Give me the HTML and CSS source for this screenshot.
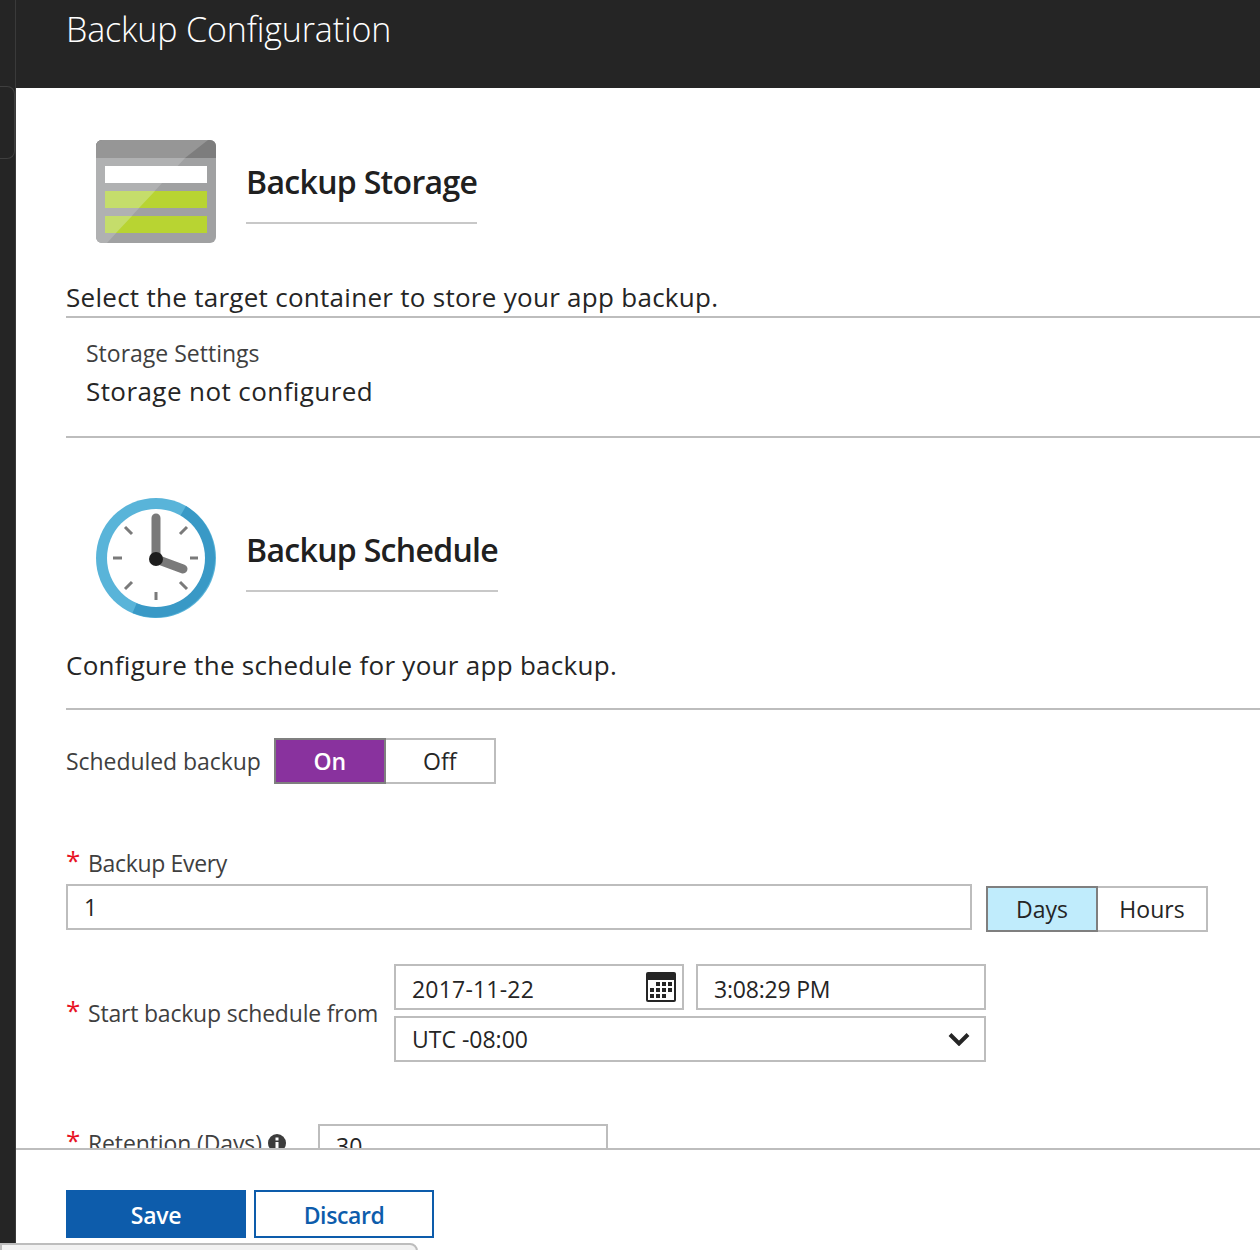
FILE: index.html
```html
<!DOCTYPE html>
<html lang="en">
<head>
  <meta charset="UTF-8" />
  <title>Backup Configuration</title>
  <link rel="stylesheet" href="styles.css">
</head>
<body>
  <div id="app">
    <div id="rail"><span class="rail-tab"></span></div>

    <div id="blade">
      <div id="top-bar">
        <h1>Backup Configuration</h1>
      </div>

      <div id="content">
        <div class="section-head storage-head">
          <svg class="section-icon" width="120" height="104" viewBox="0 0 120 104">
            <rect width="120" height="103" rx="6" fill="#a0a1a2"/>
            <path d="M6 0h108a6 6 0 0 1 6 6v12H0V6a6 6 0 0 1 6-6z" fill="#7d7d7d"/>
            <path d="M6 0h106L89 18H0V6a6 6 0 0 1 6-6z" fill="#969696"/>
            <path d="M0 18h89L11 103H6a6 6 0 0 1-6-6z" fill="#b0b1b2"/>
            <rect x="9" y="26" width="102" height="17" fill="#fff"/>
            <rect x="9" y="51" width="102" height="17" fill="#b8d432"/>
            <rect x="9" y="76" width="102" height="17" fill="#b8d432"/>
            <path d="M9 51h50L43 68H9zM9 76h27L20 93H9z" fill="#c5dd6b"/>
          </svg>
          <h2 class="section-title">Backup Storage</h2>
        </div>
        <p class="section-desc">Select the target container to store your app backup.</p>

        <div class="storage-box">
          <div class="storage-label">Storage Settings</div>
          <div class="storage-value">Storage not configured</div>
        </div>

        <div class="section-head schedule-head">
          <svg class="section-icon" width="120" height="120" viewBox="0 0 120 120">
            <circle cx="60" cy="60" r="60" fill="#59b4d9"/>
            <path d="M90 8A60 60 0 0 1 36.500 115L60 60z" fill="#3999c6"/>
            <circle cx="60" cy="60" r="49" fill="#fff"/>
            <path d="M17 60h9M94 60h8M60 94v8M29 29l7 7M91 29l-7 7M29 91l7-7M91 91l-7-7" stroke="#7a7a7a" stroke-width="3" fill="none"/>
            <path d="M60 61V20M60 61l27 10" stroke="#7a7a7a" stroke-width="9" stroke-linecap="round" fill="none"/>
            <circle cx="60" cy="61" r="7" fill="#1e1e1e"/>
          </svg>
          <h2 class="section-title">Backup Schedule</h2>
        </div>
        <p class="section-desc schedule-desc">Configure the schedule for your app backup.</p>

        <div class="toggle-row">
          <span class="field-label scheduled">Scheduled backup</span>
          <div class="toggle">
            <span class="toggle-opt on">On</span>
            <span class="toggle-opt">Off</span>
          </div>
        </div>

        <div class="field-title"><span class="req">*</span><span class="field-label every">Backup Every</span></div>
        <div class="every-row">
          <div class="text-box every-box">1</div>
          <div class="toggle unit">
            <span class="toggle-opt days">Days</span>
            <span class="toggle-opt">Hours</span>
          </div>
        </div>

        <div class="start-row">
          <div class="start-label"><span class="req">*</span><span class="field-label start">Start backup schedule from</span></div>
          <div class="start-grid">
            <div class="text-box date-box">
              2017-11-22
              <svg width="30" height="30" viewBox="0 0 30 30">
                <rect width="30" height="30" rx="2" fill="#252525"/>
                <rect x="2" y="8" width="26" height="20" fill="#fff"/>
                <path d="M10 10h4v4h-4zM16 10h4v4h-4zM22 10h4v4h-4zM4 16h4v4H4zM10 16h4v4h-4zM16 16h4v4h-4zM22 16h4v4h-4zM4 22h4v4H4zM10 22h4v4h-4zM16 22h4v4h-4z" fill="#252525"/>
              </svg>
            </div>
            <div class="text-box time-box">3:08:29 PM</div>
            <div class="text-box select-box">
              UTC -08:00
              <svg width="22" height="14" viewBox="0 0 22 14">
                <path d="M2 2.500l9 9 9-9" fill="none" stroke="#252525" stroke-width="4"/>
              </svg>
            </div>
          </div>
        </div>

        <div class="retention-row">
          <div class="retention-label">
            <span class="req">*</span><span class="field-label retention">Retention (Days)</span>
            <svg class="info" width="18" height="18" viewBox="0 0 18 18">
              <circle cx="9" cy="9" r="9" fill="#3c3c3c"/>
              <path d="M7.500 3.500h3v3h-3zM7.500 8h3v7h-3z" fill="#fff"/>
            </svg>
          </div>
          <div class="text-box retention-box">30</div>
        </div>
      </div>

      <div id="footer">
        <button class="btn btn-save">Save</button>
        <button class="btn btn-discard">Discard</button>
      </div>
    </div>
  </div>
  <div id="bottom-tab"></div>
</body>
</html>
```

FILE: styles.css
```css
:root {
  --dark: #252525;
  --line: #bdbdbd;
  --text: #252525;
  --label: #3f3f3f;
  --blue: #0d5cab;
}

* {
  box-sizing: border-box;
}

html, body {
  margin: 0;
  height: 1250px;
  overflow: hidden;
}

body {
  font-family: "Open Sans", "Noto Sans", sans-serif;
  color: var(--text);
  background: #fff;
}

#app {
  display: flex;
  height: 1250px;
}

#rail {
  width: 16px;
  background: var(--dark);
  flex-shrink: 0;
  padding-top: 86px;
  border-right: 1px solid #3a3a3a;
}

.rail-tab {
  display: block;
  height: 73px;
  width: 15px;
  border: 1px solid #3f3f3f;
  border-left: none;
  border-radius: 0 8px 8px 0;
}

#blade {
  flex: 1;
  min-width: 0;
  display: flex;
  flex-direction: column;
}

#top-bar {
  height: 88px;
  background: var(--dark);
  padding: 4px 0 0 50px;
  flex-shrink: 0;
}

#top-bar h1 {
  margin: 0;
  font-size: 34px;
  line-height: 50px;
  font-weight: 300;
  color: #fff;
  letter-spacing: -0.15px;
}

#content {
  height: 1060px;
  overflow: hidden;
  padding-left: 50px;
  flex-shrink: 0;
}

.section-head {
  display: flex;
  align-items: flex-start;
  padding-left: 30px;
}

.storage-head {
  padding-top: 52px;
  height: 155px;
}

.schedule-head {
  padding-top: 60px;
  height: 181px;
}

.section-icon {
  flex-shrink: 0;
  display: block;
}

.section-title {
  margin: 0 0 0 30px;
  height: 84px;
  padding-top: 20px;
  line-height: 44px;
  font-size: 32px;
  font-weight: 600;
  letter-spacing: -0.68px;
  border-bottom: 2px solid #c8c8c8;
  color: #202020;
}

.schedule-head .section-title {
  margin-top: 10px;
}

.section-desc {
  margin: 0;
  height: 75px;
  padding-top: 36px;
  font-size: 26px;
  line-height: 36px;
  letter-spacing: 0.28px;
  border-bottom: 2px solid var(--line);
}

.schedule-desc {
  height: 91px;
  padding-top: 28px;
}

.storage-box {
  height: 120px;
  padding: 17px 0 0 20px;
  border-bottom: 2px solid var(--line);
}

.storage-label {
  font-size: 23px;
  line-height: 36px;
  color: var(--label);
}

.storage-value {
  font-size: 26px;
  line-height: 40px;
  letter-spacing: 0.42px;
}

.field-label {
  font-size: 23px;
  line-height: 36px;
  color: var(--label);
}

.scheduled {
  letter-spacing: -0.06px;
}

.every {
  letter-spacing: -0.33px;
}

.start {
  letter-spacing: -0.2px;
}

.retention {
  letter-spacing: -0.12px;
}

.req {
  color: #e81123;
  font-size: 26px;
  line-height: 28px;
  width: 22px;
  margin-bottom: 6px;
  display: inline-block;
}

.toggle-row {
  display: flex;
  align-items: center;
  gap: 13px;
  margin-top: 28px;
  height: 46px;
}

.toggle {
  display: flex;
  height: 46px;
  width: 222px;
  font-size: 23px;
  flex-shrink: 0;
}

.toggle-opt {
  flex: 1;
  display: flex;
  align-items: center;
  justify-content: center;
  border: 2px solid var(--line);
  margin-left: -2px;
}

.toggle-opt:first-child {
  margin-left: 0;
}

.toggle-opt.on {
  background: #89329e;
  color: #fff;
  border-color: #7f7f7f;
  font-weight: 600;
  position: relative;
}

.toggle-opt.days {
  background: #c0ecfc;
  border-color: #7f7f7f;
  position: relative;
}

.field-title {
  margin-top: 60px;
  height: 38px;
  display: flex;
  align-items: center;
  margin-bottom: 2px;
}

.every-row {
  display: flex;
  gap: 14px;
  align-items: flex-start;
}

.text-box {
  height: 46px;
  border: 2px solid var(--line);
  padding: 0 16px;
  display: flex;
  align-items: center;
  justify-content: space-between;
  font-size: 23px;
}

.every-box {
  width: 906px;
}

.unit {
  margin-top: 2px;
}

.start-row {
  display: flex;
  align-items: center;
  margin-top: 32px;
}

.start-label {
  width: 328px;
  flex-shrink: 0;
  display: flex;
  align-items: center;
  white-space: nowrap;
}

.start-grid {
  display: grid;
  grid-template-columns: 290px 290px;
  gap: 6px 12px;
}

.select-box {
  grid-column: 1 / 3;
}

.date-box {
  padding-top: 4px;
  letter-spacing: 0.2px;
}

.time-box {
  padding-top: 4px;
  letter-spacing: -0.2px;
}

.date-box svg {
  margin-right: -10px;
  margin-top: -4px;
}

.select-box svg {
  margin-right: -2px;
}

.retention-row {
  display: flex;
  margin-top: 62px;
}

.retention-label {
  width: 252px;
  display: flex;
  align-items: center;
  height: 38px;
}

.info {
  margin-left: 6px;
}

.retention-box {
  width: 290px;
  align-items: flex-start;
  padding-top: 4px;
}

#footer {
  flex: 1;
  border-top: 2px solid var(--line);
  padding: 40px 0 0 50px;
  display: flex;
  gap: 8px;
  align-items: flex-start;
  background: #fff;
}

.btn {
  width: 180px;
  height: 48px;
  font-family: inherit;
  font-size: 23px;
  font-weight: 600;
  border: 2px solid var(--blue);
  padding: 2px 0 0;
}

.btn-save {
  background: var(--blue);
  color: #fff;
  letter-spacing: -0.3px;
}

.btn-discard {
  background: #fff;
  color: var(--blue);
  letter-spacing: -0.4px;
}

#bottom-tab {
  position: absolute;
  left: 0;
  top: 1243px;
  width: 418px;
  height: 20px;
  background: #f2f2f2;
  border: 2px solid #bdbdbd;
  border-radius: 0 8px 0 0;
}
```
